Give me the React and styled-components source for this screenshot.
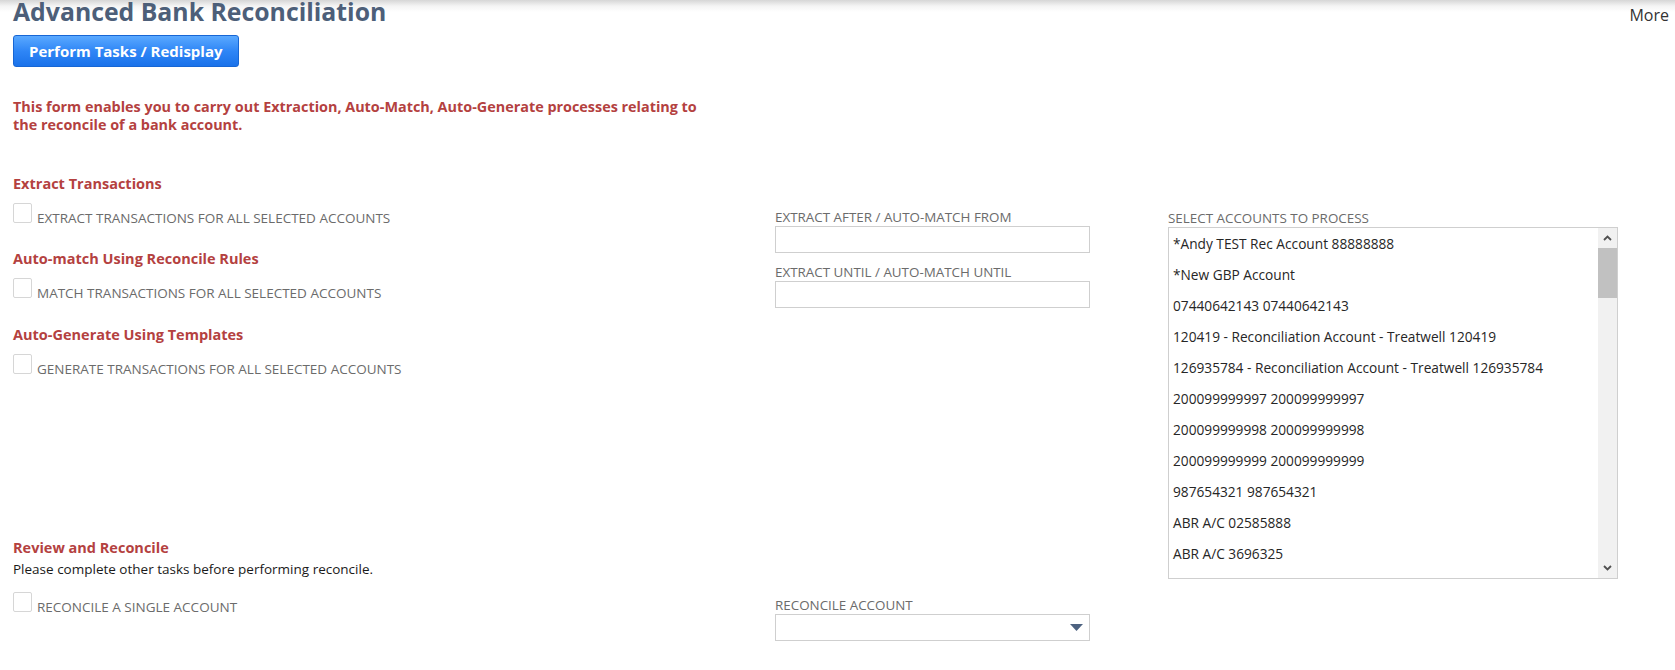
import React from 'react'
import styled, { createGlobalStyle } from 'styled-components'

const GlobalStyle = createGlobalStyle`
  html, body {
    margin: 0;
    padding: 0;
  }
  body {
    font-family: "Open Sans", "Liberation Sans", sans-serif;
    background: linear-gradient(to bottom, #d6d6d6 0px, #f4f4f4 6px, #ffffff 12px) no-repeat #ffffff;
    color: #262626;
  }
`

const Page = styled.div`
  padding: 0 6px 0 13px;
`

const Header = styled.div`
  display: flex;
  justify-content: space-between;
  align-items: flex-start;
  height: 22px;
`

const Title = styled.h1`
  margin: 0;
  font-size: 24.8px;
  line-height: 22px;
  font-weight: 700;
  color: #4d5f79;
`

const MoreLink = styled.span`
  margin-top: 4px;
  font-size: 16px;
  line-height: 22px;
  color: #333333;
`

const PrimaryButton = styled.button`
  display: block;
  margin-top: 13px;
  height: 32px;
  padding: 0 15px;
  font-family: inherit;
  font-size: 15px;
  font-weight: 700;
  color: #ffffff;
  background: linear-gradient(to bottom, #5aa9ff 0%, #2f86f6 50%, #1a72ea 100%);
  border: 1px solid #1766d4;
  border-radius: 3px;
`

const Intro = styled.p`
  margin: 31px 0 0;
  font-size: 14.4px;
  line-height: 18px;
  font-weight: 700;
  color: #b4413f;
  white-space: nowrap;
`

const FormGrid = styled.div`
  display: grid;
  grid-template-columns: 762px 393px 450px;
  align-items: start;
  margin-top: 41px;
`

const Column = styled.div`
  display: flex;
  flex-direction: column;
  padding-top: ${props => props.$offset || 0}px;
`

const Section = styled.div`
  display: flex;
  flex-direction: column;
  margin-top: ${props => props.$gap || 0}px;
`

const SectionTitle = styled.div`
  font-size: 14.5px;
  line-height: 18px;
  font-weight: 700;
  color: #b4413f;
`

const Note = styled.div`
  margin-top: 3px;
  font-size: 13.5px;
  line-height: 18px;
  color: #1a1a1a;
`

const CheckRow = styled.label`
  display: flex;
  align-items: flex-start;
  margin-top: ${props => props.$gap || 10}px;
`

const CheckBox = styled.span`
  width: 17px;
  height: 18px;
  border: 1px solid #d6d6d6;
  border-radius: 2px;
  background: #ffffff;
`

const CheckLabel = styled.span`
  margin-left: 5px;
  padding-top: 6px;
  font-size: 13.5px;
  line-height: 18px;
  color: #6b6b6b;
  text-transform: uppercase;
`

const Field = styled.div`
  display: flex;
  flex-direction: column;
  margin-top: ${props => props.$gap || 0}px;
`

const FieldLabel = styled.div`
  font-size: 13.4px;
  line-height: 18px;
  color: #6b6b6b;
  text-transform: uppercase;
`

const TextInput = styled.div`
  box-sizing: border-box;
  width: 315px;
  height: 27px;
  border: 1px solid #cfcfcf;
  background: #ffffff;
`

const SelectBox = styled(TextInput)`
  display: flex;
  align-items: center;
  justify-content: flex-end;
  padding-right: 6px;
`

const ListBox = styled.div`
  box-sizing: border-box;
  display: flex;
  width: 450px;
  height: 352px;
  border: 1px solid #cfcfcf;
  background: #ffffff;
  overflow: hidden;
`

const Options = styled.div`
  flex: 1;
  display: flex;
  flex-direction: column;
`

const Option = styled.div`
  height: 31px;
  flex: none;
  padding-left: 4px;
  font-size: 13.7px;
  line-height: 31px;
  color: #262626;
  white-space: nowrap;
`

const ScrollTrack = styled.div`
  width: 19px;
  display: flex;
  flex-direction: column;
  background: #f1f1f1;
`

const ScrollButton = styled.div`
  height: 20px;
  display: flex;
  align-items: center;
  justify-content: center;
`

const ScrollThumb = styled.div`
  height: 50px;
  background: #c1c1c1;
`

const ScrollSpacer = styled.div`
  flex: 1;
`

const Chevron = ({ down }) => (
  <svg width="9" height="6" viewBox="0 0 9 6">
    <polyline
      points={down ? '1,1 4.5,4.5 8,1' : '1,5 4.5,1.5 8,5'}
      fill="none"
      stroke="#505050"
      strokeWidth="1.8"
    />
  </svg>
)

const Caret = () => (
  <svg width="13" height="7" viewBox="0 0 13 7">
    <polygon points="0,0 13,0 6.5,7" fill="#4d6280" />
  </svg>
)

const accounts = [
  '*Andy TEST Rec Account 88888888',
  '*New GBP Account',
  '07440642143 07440642143',
  '120419 - Reconciliation Account - Treatwell 120419',
  '126935784 - Reconciliation Account - Treatwell 126935784',
  '200099999997 200099999997',
  '200099999998 200099999998',
  '200099999999 200099999999',
  '987654321 987654321',
  'ABR A/C 02585888',
  'ABR A/C 3696325',
]

export default function App() {
  return (
    <Page>
      <GlobalStyle />
      <Header>
        <Title>Advanced Bank Reconciliation</Title>
        <MoreLink>More</MoreLink>
      </Header>
      <PrimaryButton>Perform Tasks / Redisplay</PrimaryButton>
      <Intro>
        This form enables you to carry out Extraction, Auto-Match, Auto-Generate processes relating to
        <br />
        the reconcile of a bank account.
      </Intro>

      <FormGrid>
        <Column>
          <Section>
            <SectionTitle>Extract Transactions</SectionTitle>
            <CheckRow>
              <CheckBox />
              <CheckLabel>Extract transactions for all selected accounts</CheckLabel>
            </CheckRow>
          </Section>
          <Section $gap={23}>
            <SectionTitle>Auto-match Using Reconcile Rules</SectionTitle>
            <CheckRow>
              <CheckBox />
              <CheckLabel>Match transactions for all selected accounts</CheckLabel>
            </CheckRow>
          </Section>
          <Section $gap={24}>
            <SectionTitle>Auto-Generate Using Templates</SectionTitle>
            <CheckRow>
              <CheckBox />
              <CheckLabel>Generate transactions for all selected accounts</CheckLabel>
            </CheckRow>
          </Section>
          <Section $gap={161}>
            <SectionTitle>Review and Reconcile</SectionTitle>
            <Note>Please complete other tasks before performing reconcile.</Note>
            <CheckRow $gap={14}>
              <CheckBox />
              <CheckLabel>Reconcile a single account</CheckLabel>
            </CheckRow>
          </Section>
        </Column>

        <Column $offset={33}>
          <Field>
            <FieldLabel>Extract after / Auto-match from</FieldLabel>
            <TextInput />
          </Field>
          <Field $gap={10}>
            <FieldLabel>Extract until / Auto-match until</FieldLabel>
            <TextInput />
          </Field>
          <Field $gap={288}>
            <FieldLabel>Reconcile account</FieldLabel>
            <SelectBox>
              <Caret />
            </SelectBox>
          </Field>
        </Column>

        <Column $offset={34}>
          <FieldLabel>Select accounts to process</FieldLabel>
          <ListBox>
            <Options>
              {accounts.map(name => (
                <Option key={name}>{name}</Option>
              ))}
            </Options>
            <ScrollTrack>
              <ScrollButton>
                <Chevron />
              </ScrollButton>
              <ScrollThumb />
              <ScrollSpacer />
              <ScrollButton>
                <Chevron down />
              </ScrollButton>
            </ScrollTrack>
          </ListBox>
        </Column>
      </FormGrid>
    </Page>
  )
}
